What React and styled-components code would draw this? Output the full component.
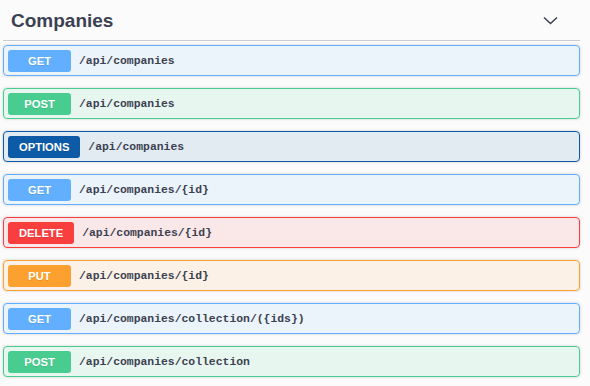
import React from 'react';
import styled, { createGlobalStyle } from 'styled-components';

const GlobalStyle = createGlobalStyle`
  body {
    margin: 0;
    background: #fbfbfb;
    font-family: "Liberation Sans", Arial, sans-serif;
  }
`;

const methods = {
  GET: '#61affe',
  POST: '#49cc90',
  OPTIONS: '#0d5aa7',
  DELETE: '#f93e3e',
  PUT: '#fca130',
};

const tint = {
  GET: 'rgba(97, 175, 254, 0.1)',
  POST: 'rgba(73, 204, 144, 0.1)',
  OPTIONS: 'rgba(13, 90, 167, 0.1)',
  DELETE: 'rgba(249, 62, 62, 0.1)',
  PUT: 'rgba(252, 161, 48, 0.1)',
};

const Section = styled.section`
  margin: 0 10px 0 3px;
  padding-bottom: 8px;
`;

const TagHeader = styled.div`
  display: flex;
  align-items: center;
  justify-content: space-between;
  height: 41px;
  padding: 0 22px 0 8px;
  border-bottom: 1px solid rgba(59, 65, 81, 0.25);
  box-sizing: border-box;
`;

const TagTitle = styled.h3`
  margin: 0;
  padding-top: 1px;
  font-size: 19px;
  font-weight: 700;
  color: #3b4151;
`;

const Operations = styled.div`
  display: flex;
  flex-direction: column;
  gap: 12px;
  padding-top: 4px;
`;

const OpBlock = styled.div`
  display: flex;
  align-items: center;
  gap: 8px;
  height: 31px;
  padding: 0 4px;
  box-sizing: border-box;
  border: 1px solid ${(p) => methods[p.$method]};
  border-radius: 4px;
  background: ${(p) => tint[p.$method]};
  box-shadow: 0 0 3px rgba(0, 0, 0, 0.19);
`;

const Method = styled.span`
  display: inline-flex;
  align-items: center;
  justify-content: center;
  min-width: 63px;
  height: 22px;
  padding: 0 11px;
  box-sizing: border-box;
  border-radius: 3px;
  background: ${(p) => methods[p.$method]};
  color: #fff;
  font-size: 11.2px;
  font-weight: 700;
  text-shadow: 0 1px 0 rgba(0, 0, 0, 0.1);
`;

const Path = styled.span`
  font-family: "Liberation Mono", "Courier New", monospace;
  font-size: 11.4px;
  font-weight: 700;
  color: #3b4151;
  padding-top: 1px;
`;

const ops = [
  ['GET', '/api/companies'],
  ['POST', '/api/companies'],
  ['OPTIONS', '/api/companies'],
  ['GET', '/api/companies/{id}'],
  ['DELETE', '/api/companies/{id}'],
  ['PUT', '/api/companies/{id}'],
  ['GET', '/api/companies/collection/({ids})'],
  ['POST', '/api/companies/collection'],
];

const Chevron = () => (
  <svg width="15" height="9" viewBox="0 0 15 9">
    <polyline points="1,1.5 7.5,7.5 14,1.5" fill="none" stroke="#3b4151" strokeWidth="1.5" />
  </svg>
);

const App = () => {
  return (
    <>
      <GlobalStyle />
      <Section>
        <TagHeader>
          <TagTitle>Companies</TagTitle>
          <Chevron />
        </TagHeader>
        <Operations>
          {ops.map(([m, path], i) => (
            <OpBlock key={i} $method={m}>
              <Method $method={m}>{m}</Method>
              <Path>{path}</Path>
            </OpBlock>
          ))}
        </Operations>
      </Section>
    </>
  );
};

export default App;
